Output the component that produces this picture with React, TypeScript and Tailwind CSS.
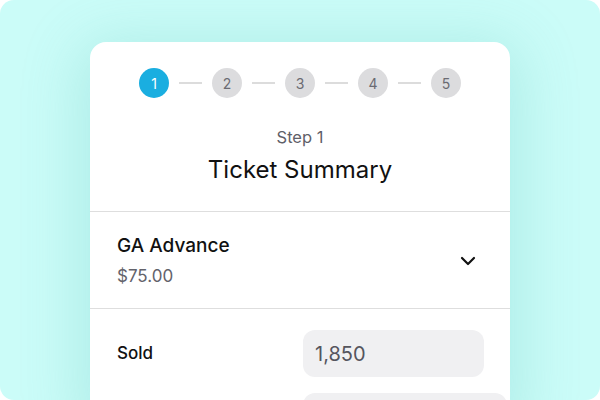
import React from 'react';
import { ChevronDown } from 'lucide-react';

const steps = [1, 2, 3, 4, 5];

export default function App() {
  return (
    <div className="w-[600px] h-[400px] bg-white overflow-hidden" style={{ fontFamily: 'Inter, "Noto Sans", sans-serif' }}>
      <div className="w-full h-full rounded-[14px] bg-[#cbfcf8] overflow-hidden pt-[42px]">
        {/* Card */}
        <div className="mx-auto w-[420px] h-[380px] bg-white rounded-2xl shadow-[0_10px_60px_10px_rgba(80,190,180,0.24)]">
          {/* Stepper */}
          <div className="flex items-center justify-center pt-[26px]">
            {steps.map((n, i) => (
              <React.Fragment key={n}>
                {i > 0 && <div className="w-[23px] h-[2px] mx-[10px] bg-[#dcdcdc]" />}
                <div
                  className={
                    n === 1
                      ? 'w-[30px] h-[30px] rounded-full flex items-center justify-center text-[14px] bg-[#1aaee0] text-white'
                      : 'w-[30px] h-[30px] rounded-full flex items-center justify-center text-[14px] bg-[#dcdcde] text-[#6b6b72]'
                  }
                >
                  {n}
                </div>
              </React.Fragment>
            ))}
          </div>

          {/* Heading */}
          <div className="flex flex-col items-center pt-[27px] pb-[25px] border-b border-[#dedede]">
            <div className="text-[16.5px] leading-6 text-[#5f6068]">Step 1</div>
            <div className="mt-[5px] text-[24px] leading-8 text-[#111]">Ticket Summary</div>
          </div>

          {/* Ticket */}
          <div className="flex items-center justify-between pl-[27px] pr-[30px] pt-[21px] pb-[20px] border-b border-[#dedede]">
            <div>
              <div className="text-[19px] leading-[26px] font-medium text-[#111]">GA Advance</div>
              <div className="mt-[5px] text-[17px] leading-6 text-[#63636b]">$75.00</div>
            </div>
            <ChevronDown className="w-[24px] h-[24px] text-[#111]" strokeWidth={2.2} />
          </div>

          {/* Fields */}
          <div className="flex flex-col gap-[16px] pt-[21px] pl-[27px]">
            <div className="flex items-center">
              <div className="w-[186px] text-[17px] font-medium text-[#111]">Sold</div>
              <div className="w-[181px] h-[47px] rounded-[12px] bg-[#f0f0f2] flex items-center px-3 text-[20px] text-[#55555e]">
                1,850
              </div>
            </div>
            <div className="flex items-center">
              <div className="w-[186px]" />
              <div className="w-[204px] h-[47px] rounded-[12px] bg-[#f0f0f2]" />
            </div>
          </div>
        </div>
      </div>
    </div>
  );
}
